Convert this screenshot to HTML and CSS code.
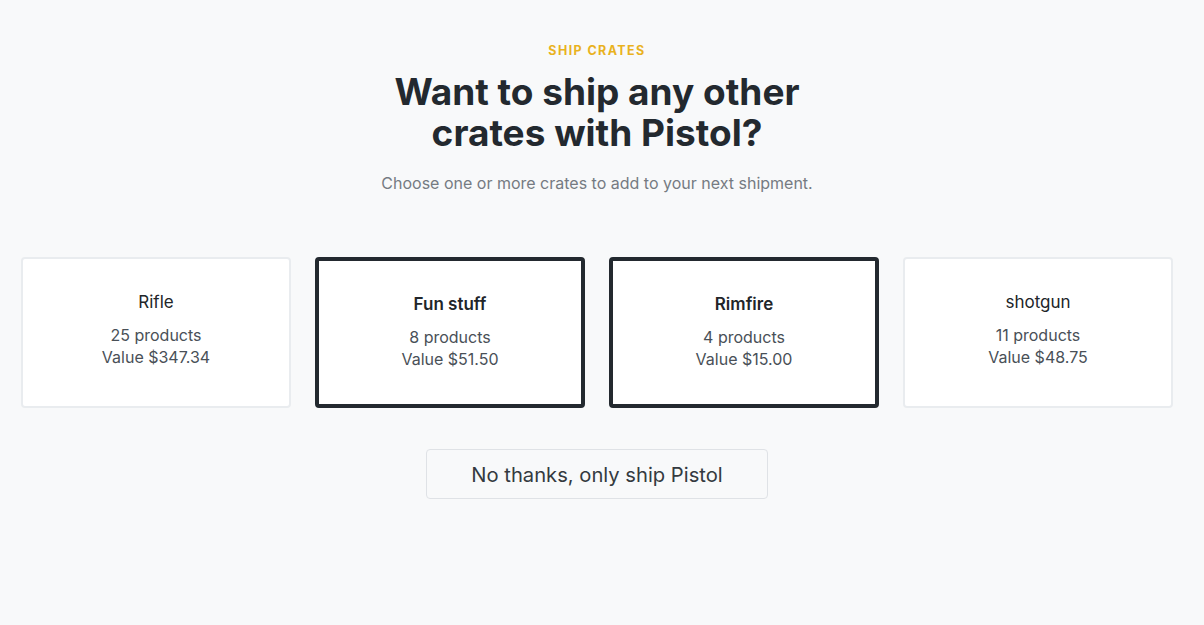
FILE: index.html
```html
<!DOCTYPE html>
<html lang="en">
<head>
    <meta charset="UTF-8">
    <meta name="viewport" content="width=device-width, initial-scale=1.0">
    <title>Ship crates</title>
    <link rel="stylesheet" href="styles.css">
</head>
<body>
    <div class="wrap">
        <div class="head">
            <p class="eyebrow">SHIP CRATES</p>
            <h1 class="title">Want to ship any other<br>crates with Pistol?</h1>
            <p class="lead">Choose one or more crates to add to your next shipment.</p>
        </div>
        <ul class="crates">
            <li class="crate">
                <h3 class="name">Rifle</h3>
                <p class="meta">25 products</p>
                <p class="meta">Value $347.34</p>
            </li>
            <li class="crate selected">
                <h3 class="name">Fun stuff</h3>
                <p class="meta">8 products</p>
                <p class="meta">Value $51.50</p>
            </li>
            <li class="crate selected">
                <h3 class="name">Rimfire</h3>
                <p class="meta">4 products</p>
                <p class="meta">Value $15.00</p>
            </li>
            <li class="crate">
                <h3 class="name">shotgun</h3>
                <p class="meta">11 products</p>
                <p class="meta">Value $48.75</p>
            </li>
        </ul>
        <div class="actions">
            <button class="btn">No thanks, only ship Pistol</button>
        </div>
    </div>
</body>
</html>
```
FILE: styles.css
```css
*{margin:0;padding:0;box-sizing:border-box;}
li{list-style: none;}
body{
    background: #f8f9fa;
    font-family: Inter, "Noto Sans", sans-serif;
    color: #212529;
}
.wrap{
    width: 1152px;
    margin-left: 21px;
}
.head{
    padding-top: 42px;
    text-align: center;
}
.eyebrow{
    font-size: 12.5px;
    line-height: 18px;
    font-weight: 700;
    letter-spacing: 1.4px;
    color: #e9b21e;
}
.title{
    margin-top: 11px;
    font-size: 37px;
    line-height: 41px;
    font-weight: 700;
    color: #23292f;
}
.lead{
    margin-top: 18px;
    font-size: 16px;
    line-height: 24px;
    color: #757b82;
}
.crates{
    display: flex;
    gap: 24px;
    margin-top: 62px;
}
.crate{
    flex: none;
    width: 270px;
    height: 151px;
    background: #fff;
    border: 2px solid #e9ecef;
    border-radius: 4px;
    text-align: center;
    padding-top: 31px;
    cursor: pointer;
}
.name{
    font-size: 17px;
    line-height: 24px;
    font-weight: 400;
    margin-bottom: 10px;
}
.meta{
    font-size: 16px;
    line-height: 22px;
    color: #495057;
}
.selected{
    border: 4px solid #23292f;
    padding-top: 31px;
}
.selected .name{
    font-weight: 600;
}
.actions{
    display: flex;
    justify-content: center;
    margin-top: 41px;
}
.btn{
    width: 342px;
    height: 50px;
    background: #f8f9fa;
    border: 1px solid #dfe2e6;
    border-radius: 4px;
    font-family: inherit;
    font-size: 20.2px;
    color: #343a40;
    cursor: pointer;
}
```
